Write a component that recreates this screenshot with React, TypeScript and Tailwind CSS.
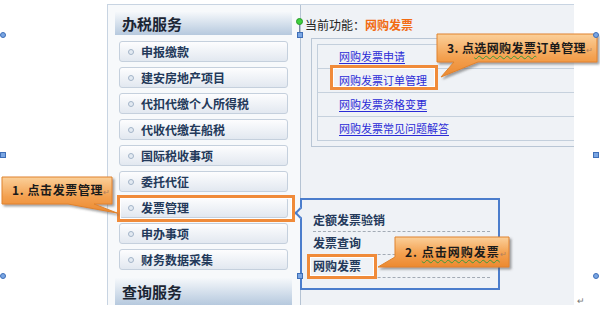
const menu = [
  "申报缴款",
  "建安房地产项目",
  "代扣代缴个人所得税",
  "代收代缴车船税",
  "国际税收事项",
  "委托代征",
  "发票管理",
  "申办事项",
  "财务数据采集",
];

const links = ["网购发票申请", "网购发票订单管理", "网购发票资格变更", "网购发票常见问题解答"];

const subItems = ["定额发票验销", "发票查询", "网购发票"];

// word-style selection handle on the picture frame
function Handle({ x, y, square }: { x: number; y: number; square?: boolean }) {
  return (
    <div
      className={
        "absolute w-[6px] h-[6px] border border-[#3f6fb8] bg-[#7aa6e3] " + (square ? "" : "rounded-full")
      }
      style={{ left: x - 3, top: y - 3 }}
    />
  );
}

export default function App() {
  return (
    <div className="relative w-[600px] h-[311px] bg-white overflow-hidden font-['Noto_Sans_CJK_SC',sans-serif]">
      {/* main panel */}
      <div className="pl-[107px] pt-[4px]">
        <div className="flex w-[467px] h-[301px] border-l border-t border-[#c8d4e2]">
          {/* sidebar */}
          <div className="w-[192px] bg-[#f7f9fb] pl-[7px] pt-[6px]">
            <div className="w-[177px] h-[24px] bg-gradient-to-b from-[#f8fafc] to-[#b6c9de] flex items-center pl-[7px] text-[15px] font-bold text-[#1b2533] leading-none">
              办税服务
            </div>
            <div className="ml-[4px] mt-[6px] flex flex-col gap-[5px]">
              {menu.map((m) => (
                <div
                  key={m}
                  className="w-[169px] h-[21px] rounded-[3px] border border-[#c5d0dd] bg-gradient-to-b from-[#fdfdfe] to-[#e2e8f0] flex items-center pl-[8px]"
                >
                  <div className="w-[6px] h-[6px] rounded-full border border-[#a3b4c8] bg-[#e3eaf2]" />
                  <span className="ml-[7px] text-[12px] font-bold text-[#23395a] leading-none">{m}</span>
                </div>
              ))}
            </div>
            <div className="mt-[7px] w-[177px] h-[28px] bg-gradient-to-b from-[#f8fafc] to-[#b6c9de] flex items-center pl-[7px] text-[15px] font-bold text-[#1b2533] leading-none">
              查询服务
            </div>
          </div>

          {/* content */}
          <div className="flex-1 bg-[#eff2f6] border-l border-[#b5c3d3] overflow-hidden">
            <div className="pt-[12px] pl-[4px] h-[33px] flex items-start text-[12px] leading-[16px]">
              <span className="text-[#222]">当前功能：</span>
              <span className="font-bold text-[#f26b12]">网购发票</span>
            </div>
            <div className="ml-[10px] w-[290px] border border-[#b9c6d5] p-[5px]">
              <div className="border border-[#c3cfdc]">
                {links.map((l, i) => (
                  <div
                    key={l}
                    className={
                      "flex items-center pl-[21px] " +
                      (i < 3 ? "h-[24px] border-b border-[#c6d1dd]" : "h-[23px]")
                    }
                  >
                    <span className="text-[11px] leading-none text-[#2b2bd6] underline underline-offset-2">{l}</span>
                  </div>
                ))}
              </div>
            </div>
          </div>
        </div>
      </div>

      {/* submenu popup */}
      <div className="absolute left-[300px] top-[198px] w-[200px] h-[92px] border-2 border-[#4b7dcc] bg-[#eff2f6] pt-[9px]">
        <div className="absolute -left-[6px] top-[9px] w-[8px] h-[8px] rotate-45 border-l-2 border-b-2 border-[#4b7dcc] bg-[#eff2f6]" />
        {subItems.map((s) => (
          <div
            key={s}
            className="ml-[11px] mr-[8px] h-[23px] flex items-center border-b border-dashed border-[#a3abb5] text-[12px] font-bold text-[#23395a] leading-none"
          >
            {s}
          </div>
        ))}
      </div>

      {/* highlight boxes */}
      <div className="absolute left-[117px] top-[195px] w-[178px] h-[27px] border-[3px] border-[#f08b3a] shadow-[inset_0_0_0_1px_#ffffff]" />
      <div className="absolute left-[330px] top-[65px] w-[108px] h-[25px] border-[3px] border-[#f08b3a] shadow-[inset_0_0_0_1px_#ffffff]" />
      <div className="absolute left-[307px] top-[254px] w-[70px] h-[25px] border-[3px] border-[#f08b3a] shadow-[inset_0_0_0_1px_#ffffff]" />

      {/* callouts */}
      <svg className="absolute left-0 top-0" width="600" height="311" viewBox="0 0 600 311">
        <defs>
          <linearGradient id="cg" x1="0" y1="0" x2="0" y2="1">
            <stop offset="0" stopColor="#fbd09a" />
            <stop offset="0.55" stopColor="#f3a04f" />
            <stop offset="1" stopColor="#ec8930" />
          </linearGradient>
          <filter id="sh" x="-10%" y="-20%" width="130%" height="160%">
            <feDropShadow dx="2" dy="2" stdDeviation="1.2" floodColor="#555" floodOpacity="0.55" />
          </filter>
        </defs>
        <path d="M2 177 H112 V204 H94 L117 213 L68 204 H2 Z" fill="url(#cg)" stroke="#e0832c" filter="url(#sh)" />
        <path d="M437 34 H597 V62 H478 L441 77 L454 62 H437 Z" fill="url(#cg)" stroke="#e0832c" filter="url(#sh)" />
        <path d="M395 237 H509 V267 H406 L378 267 L395 257 Z" fill="url(#cg)" stroke="#e0832c" filter="url(#sh)" />
      </svg>
      <div className="absolute left-[12px] top-[182px] text-[12px] font-bold leading-[16px] tracking-[0.6px] text-[#1a1a1a] whitespace-nowrap">
        1. 点击发票管理<span className="text-[8px] text-[#b08060] font-normal">↵</span>
      </div>
      <div className="absolute left-[447px] top-[40px] text-[12px] font-bold leading-[16px] tracking-[0.4px] text-[#1a1a1a] whitespace-nowrap">
        3. 点<span className="underline decoration-wavy decoration-[#3a9a3a] decoration-1 underline-offset-2">选网购发票</span>订单管理<span className="text-[8px] text-[#b08060] font-normal">↵</span>
      </div>
      <div className="absolute left-[405px] top-[244px] text-[12px] font-bold leading-[16px] tracking-[1px] text-[#1a1a1a] whitespace-nowrap">
        2. <span className="underline decoration-wavy decoration-[#3a9a3a] decoration-1 underline-offset-2">点击网购发票</span><span className="text-[8px] text-[#b08060] font-normal">↵</span>
      </div>

      {/* selection handles */}
      <div className="absolute left-[299px] top-[21px] w-px h-[14px] bg-[#7a8aa0]" />
      <div className="absolute left-[296px] top-[18px] w-[7px] h-[7px] rounded-full bg-[#3ed13e] border border-[#2a9a2a]" />
      <Handle x={3} y={35} />
      <Handle x={596} y={35} />
      <Handle x={3} y={276} />
      <Handle x={596} y={276} />
      <Handle x={3} y={155} square />
      <Handle x={596} y={155} square />
      <Handle x={300} y={35} square />
      <Handle x={300} y={276} square />

      <div className="absolute left-[577px] top-[296px] text-[9px] leading-none text-[#777]">↵</div>
    </div>
  );
}
